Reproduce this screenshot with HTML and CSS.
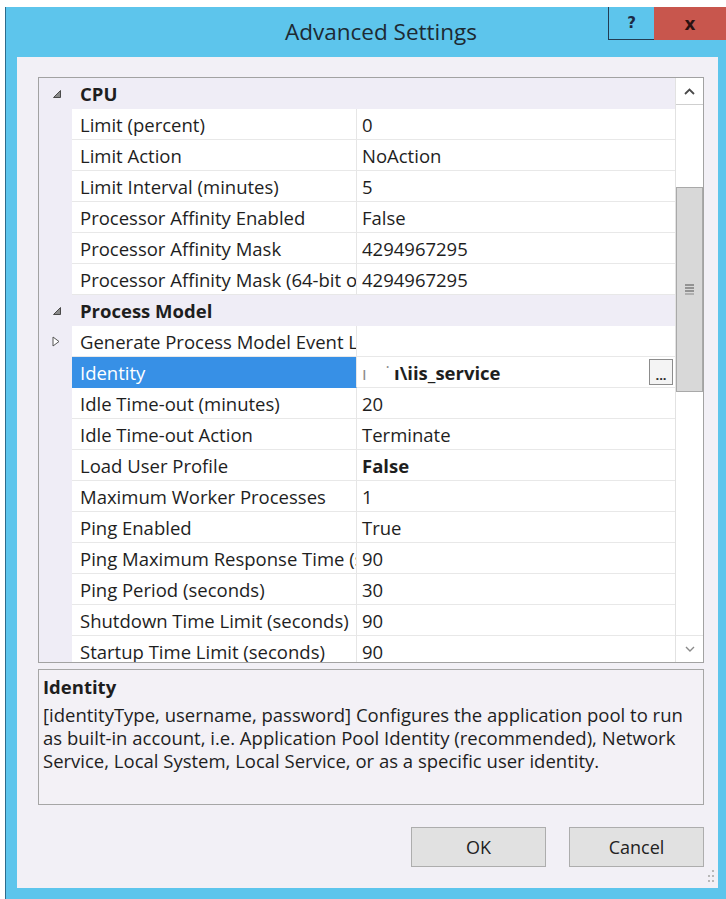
FILE: index.html
```html
<!DOCTYPE html>
<html lang="en">
<head>
<meta charset="utf-8">
<title>Advanced Settings</title>
<link rel="stylesheet" href="styles.css">
</head>
<body>
<div class="window">
  <div class="titlebar">
    <div class="spacer"></div>
    <div class="title">Advanced Settings</div>
    <div class="caption-buttons">
      <div class="cap-btn help">?</div>
      <div class="cap-btn close">x</div>
    </div>
  </div>

  <div class="client">
    <div class="propgrid">
      <div class="rows">
        <div class="row cat">
          <span class="gutter"><svg class="exp" width="8" height="8" viewBox="0 0 8 8"><polygon points="7.5,0.5 7.5,7.5 0.5,7.5" fill="#8a8a8a" stroke="#4a4a4a" stroke-width="1"/></svg></span>
          <span class="cat-name">CPU</span>
        </div>
        <div class="row prop"><span class="gutter"></span><span class="name">Limit (percent)</span><span class="val">0</span></div>
        <div class="row prop"><span class="gutter"></span><span class="name">Limit Action</span><span class="val">NoAction</span></div>
        <div class="row prop"><span class="gutter"></span><span class="name">Limit Interval (minutes)</span><span class="val">5</span></div>
        <div class="row prop"><span class="gutter"></span><span class="name">Processor Affinity Enabled</span><span class="val">False</span></div>
        <div class="row prop"><span class="gutter"></span><span class="name">Processor Affinity Mask</span><span class="val">4294967295</span></div>
        <div class="row prop"><span class="gutter"></span><span class="name">Processor Affinity Mask (64-bit option)</span><span class="val">4294967295</span></div>
        <div class="row cat">
          <span class="gutter"><svg class="exp" width="8" height="8" viewBox="0 0 8 8"><polygon points="7.5,0.5 7.5,7.5 0.5,7.5" fill="#8a8a8a" stroke="#4a4a4a" stroke-width="1"/></svg></span>
          <span class="cat-name">Process Model</span>
        </div>
        <div class="row prop">
          <span class="gutter"><svg class="col" width="8" height="11" viewBox="0 0 8 11"><polygon points="1,1 7,5.5 1,10" fill="#fff" stroke="#555" stroke-width="1"/></svg></span>
          <span class="name">Generate Process Model Event Log Entry</span><span class="val"></span>
        </div>
        <div class="row prop selected">
          <span class="gutter"></span><span class="name">Identity</span>
          <span class="val strong"><span class="ghost">ı</span>&nbsp;&nbsp;&nbsp;&nbsp;<span class="ghost">˙</span>&nbsp;ı\iis_service<span class="ellipsis-btn">...</span></span>
        </div>
        <div class="row prop"><span class="gutter"></span><span class="name">Idle Time-out (minutes)</span><span class="val">20</span></div>
        <div class="row prop"><span class="gutter"></span><span class="name">Idle Time-out Action</span><span class="val">Terminate</span></div>
        <div class="row prop"><span class="gutter"></span><span class="name">Load User Profile</span><span class="val strong">False</span></div>
        <div class="row prop"><span class="gutter"></span><span class="name">Maximum Worker Processes</span><span class="val">1</span></div>
        <div class="row prop"><span class="gutter"></span><span class="name">Ping Enabled</span><span class="val">True</span></div>
        <div class="row prop"><span class="gutter"></span><span class="name">Ping Maximum Response Time (seconds)</span><span class="val">90</span></div>
        <div class="row prop"><span class="gutter"></span><span class="name">Ping Period (seconds)</span><span class="val">30</span></div>
        <div class="row prop"><span class="gutter"></span><span class="name">Shutdown Time Limit (seconds)</span><span class="val">90</span></div>
        <div class="row prop"><span class="gutter"></span><span class="name">Startup Time Limit (seconds)</span><span class="val">90</span></div>
      </div>

      <div class="vscroll">
        <div class="sb-arrow up"><svg width="11" height="7" viewBox="0 0 11 7"><polyline points="1,6 5.5,1.5 10,6" fill="none" stroke="#4a4a4a" stroke-width="1.8"/></svg></div>
        <div class="sb-track">
          <div class="sb-thumb">
            <svg width="9" height="12" viewBox="0 0 9 12"><g stroke="#6e6e6e" stroke-width="1.3"><line x1="0" y1="1" x2="9" y2="1"/><line x1="0" y1="4" x2="9" y2="4"/><line x1="0" y1="7" x2="9" y2="7"/><line x1="0" y1="10" x2="9" y2="10" stroke="#9a9a9a"/></g></svg>
          </div>
        </div>
        <div class="sb-arrow down"><svg width="10" height="6" viewBox="0 0 10 6"><polyline points="1,1 5,5 9,1" fill="none" stroke="#8a8a8a" stroke-width="1.4"/></svg></div>
      </div>
    </div>

    <div class="desc">
      <div class="desc-title">Identity</div>
      <div class="desc-text">[identityType, username, password] Configures the application pool to run<br>as built-in account, i.e. Application Pool Identity (recommended), Network<br>Service, Local System, Local Service, or as a specific user identity.</div>
    </div>

    <div class="buttons">
      <div class="btn">OK</div>
      <div class="btn">Cancel</div>
    </div>

    <svg class="grip" width="8" height="16" viewBox="0 0 8 16"><g fill="#b8b8b8"><rect x="5" y="2" width="2" height="2"/><rect x="5" y="7" width="2" height="2"/><rect x="1" y="7" width="2" height="2"/><rect x="5" y="12" width="2" height="2"/><rect x="1" y="12" width="2" height="2"/></g></svg>
  </div>
</div>
</body>
</html>
```

FILE: styles.css
```css
html, body {
  margin: 0;
  padding: 0;
  height: 100%;
  overflow: hidden;
  background: #ffffff;
}

body {
  font-family: "Open Sans", "Noto Sans", sans-serif;
  color: #1e1e1e;
}

/* dialog frame */
.window {
  margin: 7px 0 0 5px;
  width: 725px;
  box-sizing: border-box;
  background: #5dc5ec;
  border-left: 1px solid #2e6c8c;
  padding-bottom: 12px;
}

.titlebar {
  height: 50px;
  display: grid;
  grid-template-columns: 1fr auto 1fr;
}

.title {
  align-self: center;
  font-size: 22.5px;
  color: #1d2a33;
  padding-bottom: 2px;
  padding-left: 26px;
}

.caption-buttons {
  justify-self: end;
  display: flex;
  height: 33px;
  margin-right: 4px;
}

.cap-btn {
  display: flex;
  align-items: center;
  justify-content: center;
  font-family: "DejaVu Sans", sans-serif;
  font-weight: bold;
  font-size: 15px;
}

.cap-btn.help {
  width: 45px;
  border-left: 1px solid #233d52;
  border-bottom: 1px solid #233d52;
  color: #1c2a44;
  background: #5dc5ec;
}

.cap-btn.close {
  width: 72px;
  background: #c8564d;
  color: #2a1212;
  font-size: 17px;
}

/* client area */
.client {
  position: relative;
  margin: 0 12px 0 11px;
  background: #f2f0f6;
  padding: 20px 14px 21px 21px;
}

.propgrid {
  height: 586px;
  box-sizing: border-box;
  border: 1px solid #a2a2a2;
  display: flex;
  background: #ffffff;
}

.rows {
  flex: 1;
  min-width: 0;
  overflow: hidden;
  font-size: 18.5px;
}

.row {
  display: flex;
  height: 31px;
  align-items: stretch;
  line-height: 31px;
}

.gutter {
  width: 33px;
  flex: none;
  background: #efedf6;
  display: flex;
  align-items: center;
  padding-left: 13px;
  box-sizing: border-box;
}

.cat {
  background: #efedf6;
}

.cat .exp {
  margin-left: 1px;
  margin-top: 1px;
}

.cat-name {
  font-weight: bold;
  padding-left: 8px;
}

.prop .name {
  width: 285px;
  flex: none;
  box-sizing: border-box;
  padding-left: 8px;
  white-space: nowrap;
  overflow: hidden;
  border-right: 1px solid #e6e6e6;
  border-bottom: 1px solid #e8e8e8;
}

.prop .val {
  flex: 1;
  min-width: 0;
  padding-left: 5px;
  white-space: nowrap;
  overflow: hidden;
  border-bottom: 1px solid #e8e8e8;
  display: flex;
  align-items: center;
}

.prop .val.strong {
  font-weight: bold;
}

.prop.selected .name {
  background: #3790e6;
  color: #ffffff;
  border-bottom-color: #3790e6;
}

.ghost {
  color: #8c8c8c;
  font-weight: normal;
}

.ellipsis-btn {
  margin-left: auto;
  margin-right: 2px;
  width: 24px;
  height: 26px;
  box-sizing: border-box;
  border: 1px solid #8c8c8c;
  background: #f4f4f4;
  color: #2a2a2a;
  font-weight: bold;
  font-size: 13px;
  line-height: 30px;
  text-align: center;
  letter-spacing: 0;
}

/* vertical scrollbar */
.vscroll {
  width: 27px;
  flex: none;
  display: flex;
  flex-direction: column;
  border-left: 1px solid #e2e2e2;
  background: #ffffff;
}

.sb-arrow {
  height: 27px;
  flex: none;
  display: flex;
  align-items: center;
  justify-content: center;
}

.sb-arrow.up {
  border-bottom: 1px solid #cfcfcf;
  box-sizing: border-box;
}

.sb-arrow.down {
  border-top: 1px solid #e6e6e6;
  box-sizing: border-box;
}

.sb-track {
  flex: 1;
}

.sb-thumb {
  margin-top: 82px;
  height: 205px;
  box-sizing: border-box;
  background: #d8d8d8;
  border: 1px solid #a9a9a9;
  display: flex;
  align-items: center;
  justify-content: center;
}

/* description pane */
.desc {
  margin-top: 6px;
  height: 136px;
  box-sizing: border-box;
  border: 1px solid #a6a6a6;
  background: #f3f1f6;
  padding: 4px 0 0 4px;
  font-size: 18.5px;
}

.desc-title {
  font-weight: bold;
  line-height: 26px;
}

.desc-text {
  line-height: 23px;
  margin-top: 3px;
  white-space: nowrap;
}

/* dialog buttons */
.buttons {
  margin-top: 22px;
  display: flex;
  justify-content: flex-end;
  gap: 23px;
}

.btn {
  width: 135px;
  height: 40px;
  box-sizing: border-box;
  border: 1px solid #adadad;
  background: #e1e1e1;
  display: flex;
  align-items: center;
  justify-content: center;
  font-size: 18px;
  color: #222;
}

.grip {
  position: absolute;
  right: 3px;
  bottom: 4px;
}
```
